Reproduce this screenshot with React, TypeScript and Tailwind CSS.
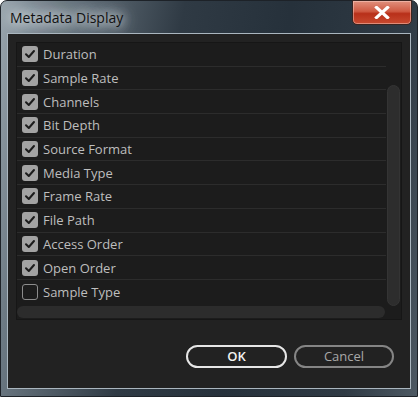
import React from "react";

const items: { label: string; checked: boolean }[] = [
  { label: "Duration", checked: true },
  { label: "Sample Rate", checked: true },
  { label: "Channels", checked: true },
  { label: "Bit Depth", checked: true },
  { label: "Source Format", checked: true },
  { label: "Media Type", checked: true },
  { label: "Frame Rate", checked: true },
  { label: "File Path", checked: true },
  { label: "Access Order", checked: true },
  { label: "Open Order", checked: true },
  { label: "Sample Type", checked: false },
];

function CheckBox({ checked }: { checked: boolean }) {
  if (!checked) {
    return (
      <span className="w-[16px] h-[16px] rounded-[3px] border-[1.5px] border-[#8c8c8c] shrink-0" />
    );
  }
  return (
    <span className="w-[16px] h-[16px] rounded-[3px] bg-[#a3a3a3] shrink-0 flex items-center justify-center">
      <svg width="12" height="12" viewBox="0 0 12 12">
        <path
          d="M2 6.2 L4.8 9 L10 3"
          fill="none"
          stroke="#1c1c1c"
          strokeWidth="2"
          strokeLinecap="round"
          strokeLinejoin="round"
        />
      </svg>
    </span>
  );
}

export default function App() {
  return (
    <div
      className="w-[418px] h-[397px] rounded-t-[7px] border border-[#1d2228] bg-[linear-gradient(100deg,#9aa6ae_0%,#6d7a84_12%,#2f3a44_38%,#26313b_60%,#2f3a44_85%,#4d5963_100%)] flex flex-col px-[6px] pb-[7px]"
      style={{ fontFamily: '"Open Sans", "Liberation Sans", sans-serif' }}
    >
      {/* title bar */}
      <div className="h-[32px] flex items-start justify-between shrink-0">
        <div className="pl-[3px] pt-[6px] text-[14px] text-[#111] [text-shadow:0_0_10px_#dfe6ea,0_0_14px_#dfe6ea,0_0_18px_#c9d2d8]">
          Metadata Display
        </div>
        <div className="mt-[-1px] mr-[-1px] w-[60px] h-[25px] rounded-b-[5px] border border-[#3b2420] bg-[linear-gradient(180deg,#e0907d_0%,#cf5a43_45%,#b8301a_55%,#c84a30_100%)] shadow-[inset_0_0_0_1px_rgba(255,220,210,0.45)] flex items-center justify-center">
          <svg width="16" height="13" viewBox="0 0 16 13">
            <path
              d="M2.5 1.5 L13.5 11.5 M13.5 1.5 L2.5 11.5"
              stroke="#ffffff"
              strokeWidth="3.2"
              strokeLinecap="square"
            />
          </svg>
        </div>
      </div>

      {/* client area */}
      <div className="flex-1 border border-[#aab6bf] bg-[#222222] flex flex-col">
        <div className="mt-[8px] mx-[8px] h-[278px] border border-[#161616] bg-[#1c1c1c] flex">
          <div className="flex-1 flex flex-col">
            <div className="flex flex-col">
              {items.map((it, i) => (
                <div
                  key={it.label}
                  className={`h-[23.7px] flex items-center gap-[5px] pl-[5px] ${
                    i < items.length - 1 ? "border-b border-[#2c2c2c]" : ""
                  }`}
                >
                  <CheckBox checked={it.checked} />
                  <span className="text-[13px] text-[#bebebe] leading-none pt-[1px]">
                    {it.label}
                  </span>
                </div>
              ))}
            </div>
            <div className="mt-auto mb-[1px] h-[12px] mr-[1px] rounded-full bg-[#2c2c2c]" />
          </div>
          <div className="w-[15px] flex flex-col pt-[42px] pb-[13px] pl-[1px]">
            <div className="flex-1 w-[13px] rounded-full bg-[#2d2d2d] border border-[#343434]" />
          </div>
        </div>

        <div className="flex justify-end gap-[7px] pr-[16px] mt-[25px]">
          <button className="w-[101px] h-[23px] rounded-full border-2 border-[#e6e6e6] text-[13px] font-semibold text-[#f2f2f2] leading-none">
            OK
          </button>
          <button className="w-[100px] h-[23px] rounded-full border-2 border-[#858585] text-[13px] text-[#a8a8a8] leading-none">
            Cancel
          </button>
        </div>
      </div>
    </div>
  );
}
